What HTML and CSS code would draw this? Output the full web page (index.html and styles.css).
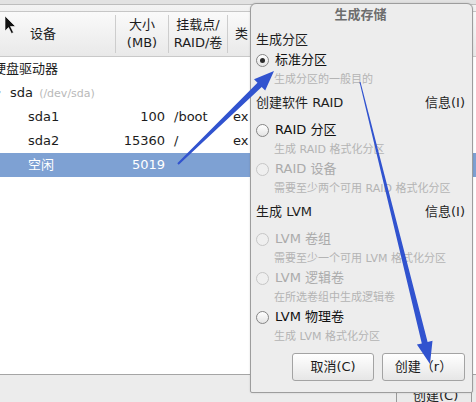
FILE: index.html
```html
<!DOCTYPE html>
<html>
<head>
<meta charset="utf-8">
<link rel="stylesheet" href="styles.css">
</head>
<body>
<div class="screen">
  <div class="window">
    <div class="topbar"></div>
    <div class="thead">
      <div class="th c1 left">设备</div>
      <div class="th c2">大小<br>(MB)</div>
      <div class="th c3">挂载点/<br>RAID/卷</div>
      <div class="th c4 left">类</div>
    </div>
    <div class="tbody">
      <div class="row"><div class="cell c1 lvl0">硬盘驱动器</div></div>
      <div class="row"><div class="cell c1 lvl1"><span class="tri">▾</span>sda <span class="dev">(/dev/sda)</span></div></div>
      <div class="row"><div class="cell c1 lvl2">sda1</div><div class="cell c2 num">100</div><div class="cell c3">/boot</div><div class="cell c4">ex</div></div>
      <div class="row"><div class="cell c1 lvl2">sda2</div><div class="cell c2 num">15360</div><div class="cell c3">/</div><div class="cell c4">ex</div></div>
      <div class="row selected"><div class="cell c1 lvl2">空闲</div><div class="cell c2 num">5019</div><div class="cell c3"></div><div class="cell c4"></div></div>
      <div class="fill"></div>
    </div>
    <div class="footer"><div class="footbtn">创建(C)</div></div>
  </div>

  <div class="dialog">
    <div class="title">生成存储</div>
    <div class="head">生成分区</div>
    <div class="radio"><span class="rb checked"></span>标准分区</div>
    <div class="sub">生成分区的一般目的</div>

    <div class="head sec"><span>创建软件 RAID</span><span>信息(I)</span></div>
    <div class="radio after-head"><span class="rb"></span>RAID 分区</div>
    <div class="sub">生成 RAID 格式化分区</div>
    <div class="radio disabled"><span class="rb"></span>RAID 设备</div>
    <div class="sub">需要至少两个可用 RAID 格式化分区</div>

    <div class="head sec"><span>生成 LVM</span><span>信息(I)</span></div>
    <div class="radio after-head disabled"><span class="rb"></span>LVM 卷组</div>
    <div class="sub">需要至少一个可用 LVM 格式化分区</div>
    <div class="radio disabled"><span class="rb"></span>LVM 逻辑卷</div>
    <div class="sub">在所选卷组中生成逻辑卷</div>
    <div class="radio"><span class="rb"></span>LVM 物理卷</div>
    <div class="sub">生成 LVM 格式化分区</div>

    <div class="buttons">
      <div class="btn btn-cancel">取消(C)</div>
      <div class="btn btn-ok">创建（r）</div>
    </div>
  </div>

  <svg class="overlay" width="476" height="402" viewBox="0 0 476 402">
    <polygon class="arrow" points="177.3,163.3 257.5,82.7 254,79.2 274,71 265.2,90.6 261.7,87.1 178.7,164.7"/>
    <polygon class="arrow" points="359.5,82 421.8,343.4 416.9,344.6 430,364 432.5,340.8 427.6,342 360.5,82"/>
    <polygon class="cursor" points="5,16 5,31 8.5,27.5 11.5,33.5 13.5,32.5 10.5,26.5 15.5,26.5"/>
  </svg>
</div>
</body>
</html>
```
FILE: styles.css
```css
* { box-sizing: border-box; }
html, body { margin: 0; padding: 0; }
body {
  font-family: "DejaVu Sans", "Noto Sans CJK SC", sans-serif;
  font-size: 13px;
  color: #1c1c1c;
  background: #ececec;
}
.screen {
  position: relative;
  width: 476px;
  height: 402px;
  overflow: hidden;
}
.window {
  width: 476px;
  height: 402px;
  display: flex;
  flex-direction: column;
  background: #ffffff;
}
.topbar {
  height: 12px;
  background: linear-gradient(#e2e2e2 0, #e2e2e2 4px, #bdbdbd 4px, #bdbdbd 5px, #f3f3f3 5px, #f0f0f0 11px, #c6c6c6 11px);
}
.thead {
  height: 45px;
  display: flex;
  background: linear-gradient(#fafafa, #e9e9e9);
  border-bottom: 1px solid #c9c9c9;
}
.th {
  display: flex;
  align-items: center;
  justify-content: center;
  text-align: center;
  line-height: 18px;
  border-right: 1px solid #cdcdcd;
  margin: 3px 0;
}
.th.left { justify-content: flex-start; }
.c1 { width: 116px; flex: none; }
.c2 { width: 53px; flex: none; }
.c3 { width: 59px; flex: none; }
.c4 { flex: 1; }
.th.c1 { padding-left: 30px; }
.th.c4 { padding-left: 7px; border-right: none; }
.tbody {
  flex: 1;
  display: flex;
  flex-direction: column;
  background: #ffffff;
}
.row {
  height: 24px;
  display: flex;
  align-items: center;
  white-space: nowrap;
}
.row.selected {
  background: #7ea1d3;
  color: #ffffff;
}
.cell { line-height: 24px; overflow: visible; }
.cell.c3 { padding-left: 5px; }
.cell.c4 { padding-left: 5px; }
.num { text-align: right; padding-right: 4px; }
.lvl0 { margin-left: -7px; width: 123px; }
.lvl1 { padding-left: 0; }
.lvl2 { padding-left: 28px; }
.tri {
  display: inline-block;
  width: 10px;
  margin-left: -5px;
  margin-right: 5px;
  font-size: 11px;
  color: #333;
}
.dev { color: #b9b9b9; font-size: 11px; margin-left: 2px; }
.fill { flex: 1; }
.footer {
  height: 28px;
  border-top: 1px solid #a5a5a5;
  background: #ececec;
  padding-left: 396px;
  padding-top: 6px;
}
.footbtn {
  height: 30px;
  width: 76px;
  border: 1px solid #9a9a9a;
  border-radius: 3px;
  background: #eaeaea;
  line-height: 28px;
  padding-left: 16px;
  color: #222;
}

.dialog {
  position: absolute;
  left: 250px;
  top: 3px;
  width: 223px;
  height: 390px;
  background: #ededed;
  border: 1px solid #9d9d9d;
  border-radius: 6px 6px 2px 2px;
  padding: 0 7px 0 5px;
  display: flex;
  flex-direction: column;
  box-shadow: 0 0 2px rgba(0,0,0,0.15);
}
.title {
  height: 26px;
  line-height: 22px;
  text-align: center;
  font-weight: bold;
  color: #6d6d6d;
  flex: none;
}
.head {
  height: 20px;
  line-height: 20px;
  color: #1e1e1e;
  display: flex;
  justify-content: space-between;
  flex: none;
}
.head.sec { margin-top: 4px; }
.radio {
  height: 20px;
  line-height: 20px;
  display: flex;
  align-items: center;
  color: #111;
  flex: none;
}
.radio.after-head { margin-top: 7px; }
.radio.disabled { color: #ababab; }
.rb {
  width: 13px;
  height: 13px;
  border-radius: 50%;
  border: 1px solid #858585;
  background: linear-gradient(#ffffff, #e4e4e4);
  margin-right: 6px;
  flex: none;
  display: flex;
  align-items: center;
  justify-content: center;
}
.rb.checked::after {
  content: "";
  width: 5px;
  height: 5px;
  border-radius: 50%;
  background: #2a2a2a;
}
.radio.disabled .rb {
  border-color: #c6c6c6;
  background: #efefef;
}
.sub {
  height: 19px;
  line-height: 19px;
  font-size: 11px;
  color: #b4b4b4;
  padding-left: 18px;
  white-space: nowrap;
  flex: none;
}
.buttons {
  margin-top: 7px;
  display: flex;
  justify-content: flex-end;
  gap: 8px;
  padding-right: 0;
}
.btn {
  height: 28px;
  border: 1px solid #a3a3a3;
  border-radius: 3px;
  background: linear-gradient(#ffffff, #e6e6e6);
  line-height: 26px;
  text-align: center;
  color: #1a1a1a;
}
.btn-cancel { width: 82px; }
.btn-ok { width: 83px; }

.overlay {
  position: absolute;
  left: 0;
  top: 0;
  pointer-events: none;
}
.arrow { fill: #3153cf; }
.cursor { fill: #111; stroke: #ffffff; stroke-width: 0.6; }
```
